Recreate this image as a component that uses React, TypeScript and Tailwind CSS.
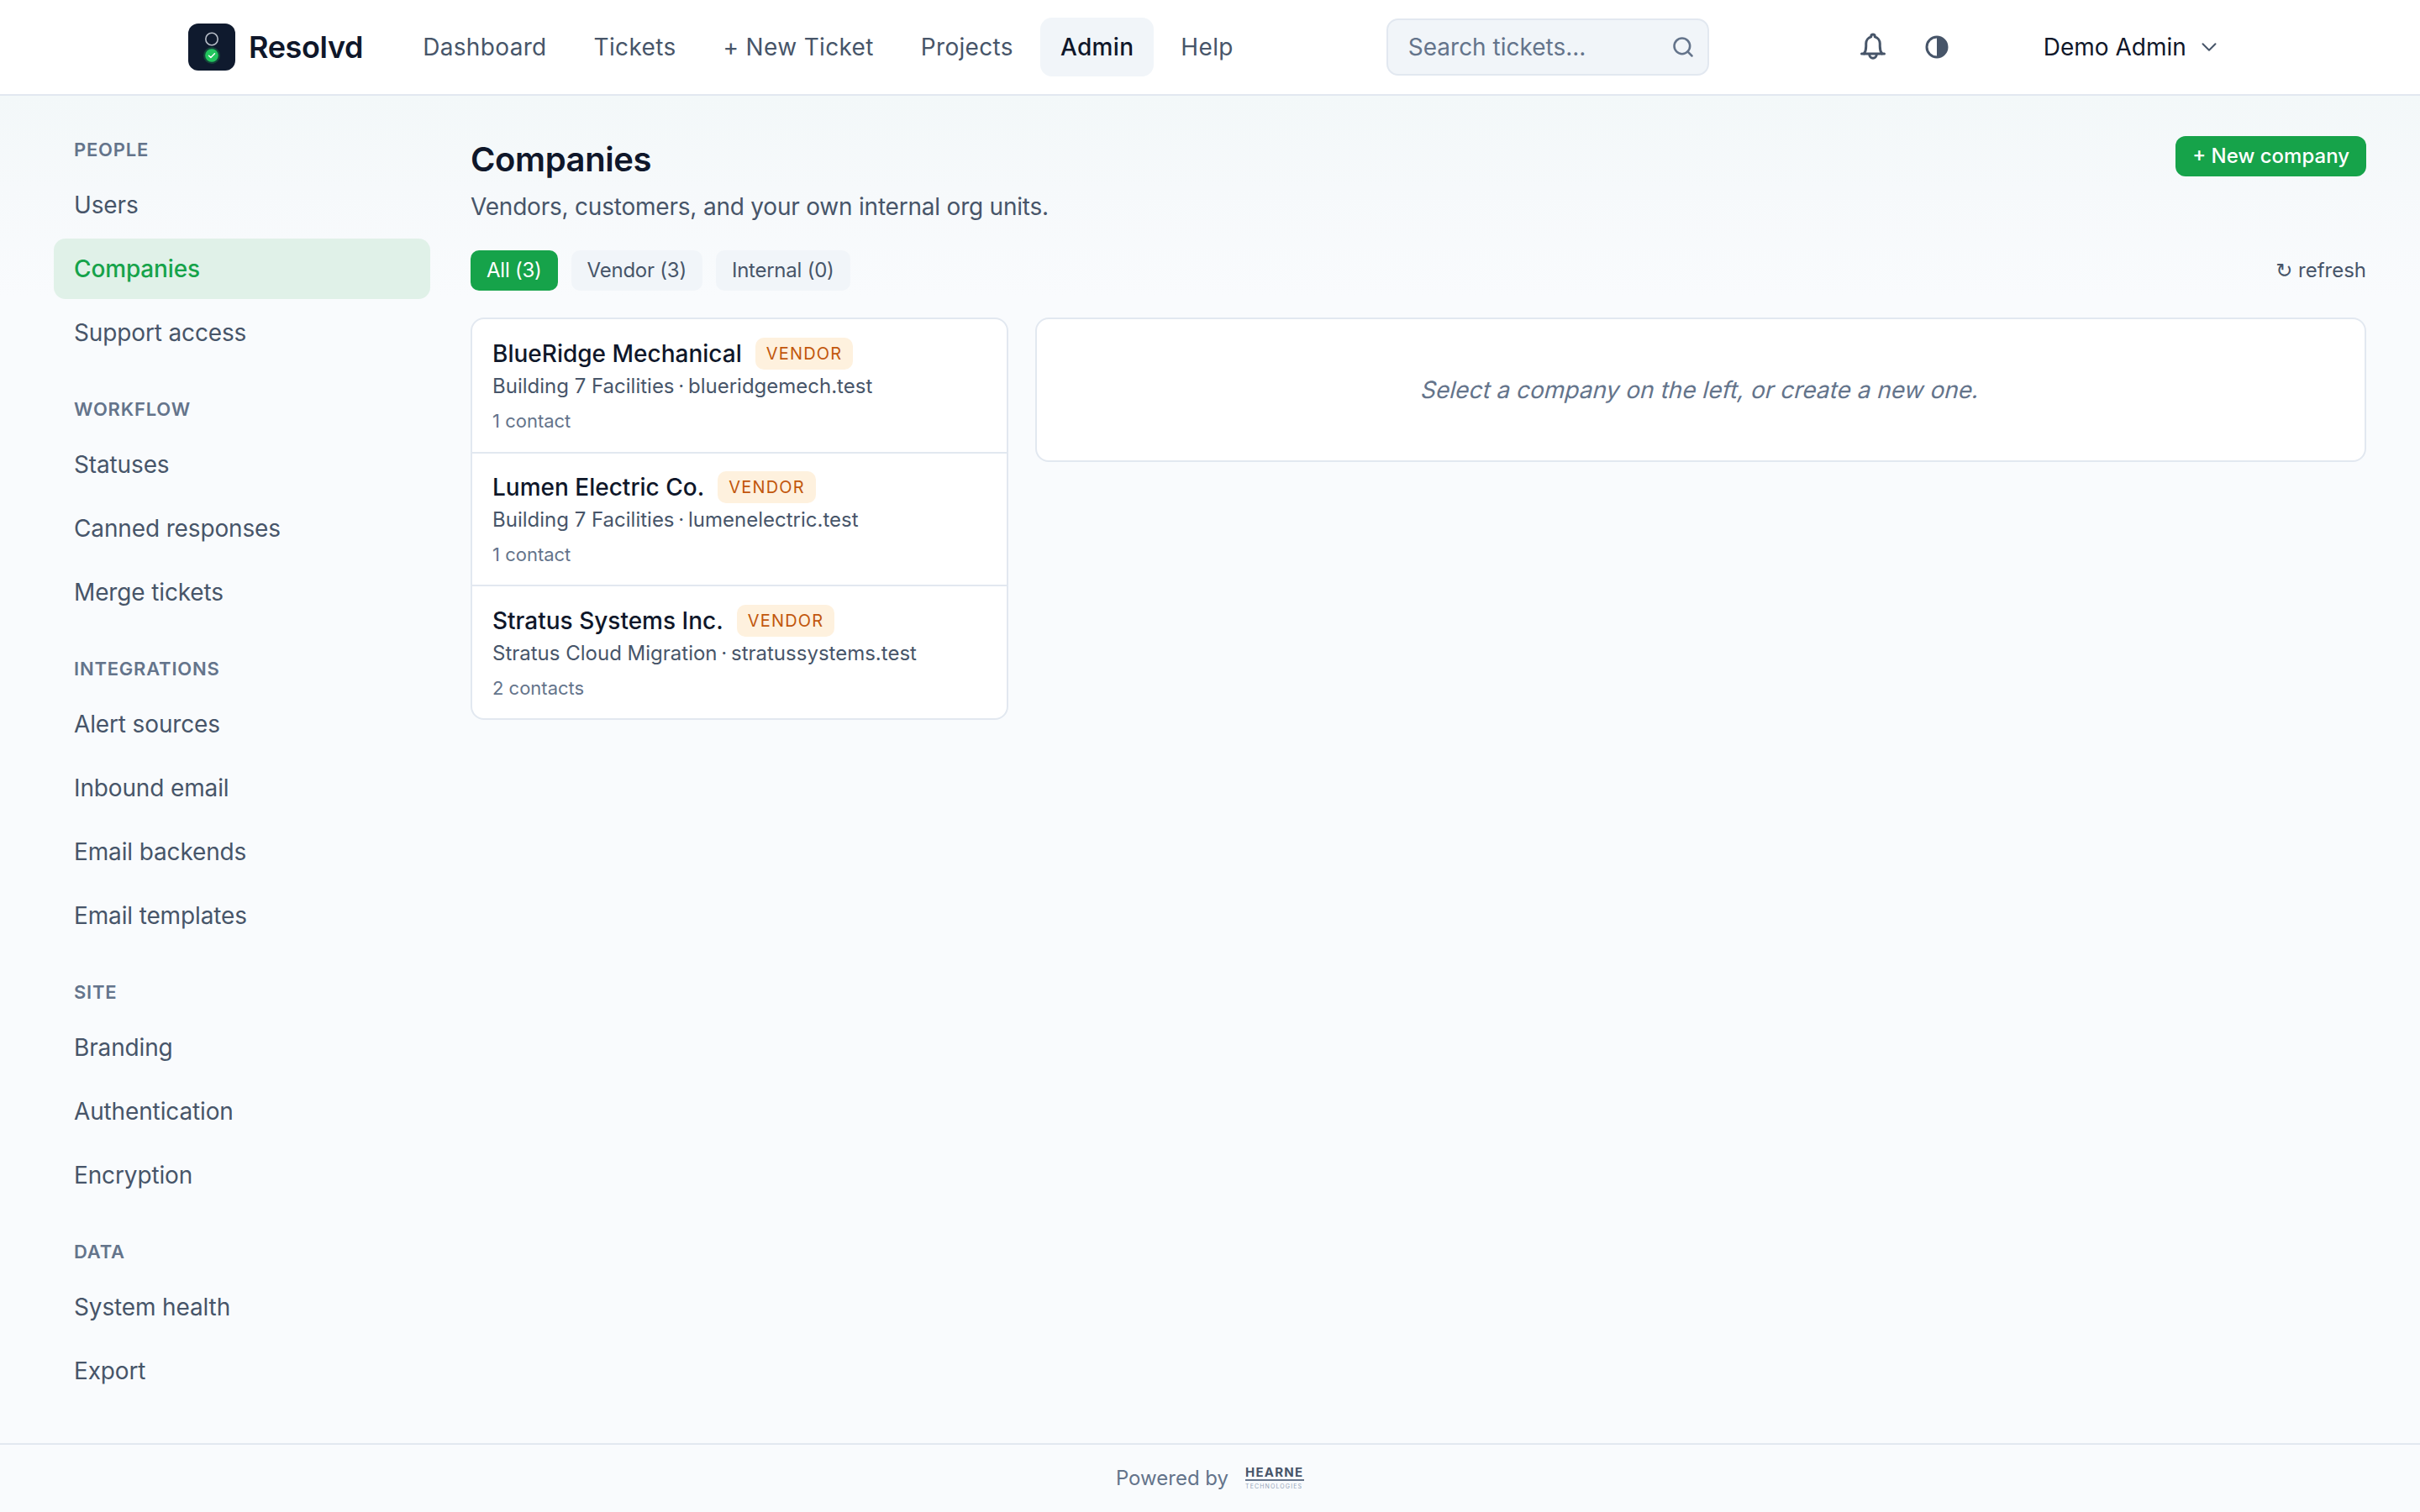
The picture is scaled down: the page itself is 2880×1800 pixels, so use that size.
import { ChevronDown, Search } from "lucide-react";

const navItems = ["Dashboard", "Tickets", "+ New Ticket", "Projects", "Admin", "Help"];

const sections = [
  { label: "PEOPLE", items: ["Users", "Companies", "Support access"] },
  { label: "WORKFLOW", items: ["Statuses", "Canned responses", "Merge tickets"] },
  { label: "INTEGRATIONS", items: ["Alert sources", "Inbound email", "Email backends", "Email templates"] },
  { label: "SITE", items: ["Branding", "Authentication", "Encryption"] },
  { label: "DATA", items: ["System health", "Export"] },
];

const companies = [
  { name: "BlueRidge Mechanical", org: "Building 7 Facilities", domain: "blueridgemech.test", contacts: "1 contact", rowClass: "h-[160px] border-b-2 border-[#e2e8f0] px-6 pt-[22px]" },
  { name: "Lumen Electric Co.", org: "Building 7 Facilities", domain: "lumenelectric.test", contacts: "1 contact", rowClass: "h-[158px] border-b-2 border-[#e2e8f0] px-6 pt-[21px]" },
  { name: "Stratus Systems Inc.", org: "Stratus Cloud Migration", domain: "stratussystems.test", contacts: "2 contacts", rowClass: "h-[157px] px-6 pt-[22px]" },
];

function Logo() {
  return (
    <svg width="56" height="56" viewBox="0 0 56 56" className="shrink-0">
      <rect width="56" height="56" rx="12" fill="#0f1a2e" />
      <circle cx="28" cy="18.5" r="7.2" fill="none" stroke="#b6bcc6" strokeWidth="1.6" />
      <circle cx="28" cy="38" r="10" fill="#22c55e" opacity="0.25" />
      <circle cx="28" cy="38" r="7.8" fill="#22c55e" />
      <path d="M24.5 38.2l2.4 2.4 4.6-4.8" fill="none" stroke="#fff" strokeWidth="1.4" strokeLinecap="round" strokeLinejoin="round" />
    </svg>
  );
}

function BellIcon() {
  return (
    <svg width="36" height="36" viewBox="0 0 24 24" fill="none" stroke="#475569" strokeWidth="2" strokeLinecap="round" strokeLinejoin="round">
      <path d="M3 17.3h18" />
      <path d="M4.8 17.3c1.2-1.5 1.7-3 1.7-6V9.2a5.5 5.5 0 0 1 4-5.3v-.4a1.5 1.5 0 0 1 3 0v.4a5.5 5.5 0 0 1 4 5.3v2.1c0 3 .5 4.5 1.7 6" />
      <path d="M9.2 18a2.8 2.8 0 0 0 5.6 0" />
    </svg>
  );
}

function ContrastIcon() {
  return (
    <svg width="28" height="28" viewBox="0 0 28 28">
      <circle cx="14" cy="14" r="12" fill="none" stroke="#475569" strokeWidth="3" />
      <path d="M14 2a12 12 0 0 1 0 24z" fill="#475569" />
    </svg>
  );
}

function Header() {
  return (
    <header className="flex h-[114px] shrink-0 items-center border-b-2 border-[#e2e8f0] bg-white pl-[224px]">
      <Logo />
      <span className="ml-4 text-[36px] font-semibold leading-[56px] tracking-[-0.01em] text-[#0f172a]">Resolvd</span>
      <nav className="ml-[47px] flex items-center gap-2">
        {navItems.map((item) => (
          <a
            key={item}
            className={
              item === "Admin"
                ? "rounded-[14px] bg-[#f1f5f9] px-6 py-[14px] text-[28px] font-medium leading-[42px] tracking-[0.012em] text-[#0f172a]"
                : "rounded-[14px] px-6 py-[14px] text-[28px] leading-[42px] tracking-[0.012em] text-[#475569]"
            }
          >
            {item}
          </a>
        ))}
      </nav>
      <div className="ml-[158px] flex h-[68px] w-[384px] items-center justify-between rounded-[14px] border-2 border-[#e2e8f0] bg-[#f1f5f9] pl-6 pr-[15px]">
        <span className="text-[28px] text-[#64748b]">Search tickets...</span>
        <Search size={28} strokeWidth={2.2} className="text-[#64748b]" />
      </div>
      <div className="ml-[177px] flex items-center">
        <BellIcon />
      </div>
      <div className="ml-[44px] flex items-center">
        <ContrastIcon />
      </div>
      <div className="ml-[113px] flex items-center gap-[12px]">
        <span className="text-[28px] text-[#0f172a]">Demo Admin</span>
        <ChevronDown size={30} strokeWidth={1.6} className="text-[#475569]" />
      </div>
    </header>
  );
}

function Sidebar() {
  return (
    <aside className="flex w-[448px] shrink-0 flex-col gap-[37px] pt-[46px]">
      {sections.map((section) => (
        <div key={section.label}>
          <div className="mb-3 pl-6 text-[22px] font-semibold leading-[36px] tracking-[0.036em] text-[#64748b]">
            {section.label}
          </div>
          <div className="flex flex-col gap-1">
            {section.items.map((item) => (
              <a
                key={item}
                className={
                  item === "Companies"
                    ? "block h-[72px] rounded-[14px] bg-[#e0f1e8] pl-6 text-[28px] font-medium leading-[72px] tracking-[-0.005em] text-[#16a34a]"
                    : "block h-[72px] rounded-[14px] pl-6 text-[28px] leading-[72px] tracking-[-0.005em] text-[#475569]"
                }
              >
                {item}
              </a>
            ))}
          </div>
        </div>
      ))}
    </aside>
  );
}

type Company = { name: string; org: string; domain: string; contacts: string; rowClass: string };

function CompanyRow({ name, org, domain, contacts, rowClass }: Company) {
  return (
    <div className={rowClass}>
      <div className="flex h-[38px] items-center gap-4">
        <span className="text-[28px] font-medium leading-[38px] text-[#0f172a]">{name}</span>
        <span className="rounded-[10px] bg-[#fef1de] px-[13px] text-[20px] leading-[38px] tracking-[0.06em] text-[#c2570c]">
          VENDOR
        </span>
      </div>
      <div className="text-[24px] leading-[39px] text-[#475569]">
        {org} <span className="mx-[-2px]">·</span> {domain}
      </div>
      <div className="mt-1 text-[22px] leading-[36px] text-[#64748b]">{contacts}</div>
    </div>
  );
}

export default function App() {
  const filters = ["All (3)", "Vendor (3)", "Internal (0)"];
  return (
    <div className="flex min-h-screen flex-col bg-[#f9fbfd] font-['Inter',sans-serif]">
      <Header />
      <div className="flex flex-1 gap-12 bg-[linear-gradient(180deg,#f3f8f9_0px,#f6f9fb_110px,#f9fbfd_240px)] px-16">
        <Sidebar />
        <main className="min-w-0 flex-1 pt-[48px]">
          <div className="flex items-start justify-between">
            <div>
              <h1 className="text-[40px] font-semibold leading-[56px] tracking-[-0.01em] text-[#0f172a]">Companies</h1>
              <p className="mt-[7px] text-[28px] leading-[42px] tracking-[-0.0075em] text-[#475569]">Vendors, customers, and your own internal org units.</p>
            </div>
            <button className="h-[48px] rounded-[12px] bg-[#16a34a] px-[20px] text-[24px] font-medium text-white">
              + New company
            </button>
          </div>
          <div className="mt-[31px] flex h-[48px] items-center justify-between">
            <div className="flex gap-4">
              {filters.map((f, i) => (
                <span
                  key={f}
                  className={
                    i === 0
                      ? "rounded-[10px] bg-[#16a34a] px-[19px] text-[24px] leading-[48px] tracking-[-0.01em] text-white"
                      : "rounded-[10px] bg-[#f1f5f9] px-[19px] text-[24px] leading-[48px] tracking-[-0.01em] text-[#475569]"
                  }
                >
                  {f}
                </span>
              ))}
            </div>
            <span className="text-[24px] text-[#475569]">
              <span className="font-['DejaVu_Sans',sans-serif]">↻</span> refresh
            </span>
          </div>
          <div className="mt-8 flex items-start gap-8">
            <div className="w-[640px] shrink-0 overflow-hidden rounded-[16px] border-2 border-[#e2e8f0] bg-white">
              {companies.map((c) => (
                <CompanyRow key={c.name} {...c} />
              ))}
            </div>
            <div className="flex h-[172px] flex-1 items-center justify-center rounded-[16px] border-2 border-[#e2e8f0] bg-white">
              <span className="inline-block skew-x-[-14deg] text-[28px] text-[#64748b]">Select a company on the left, or create a new one.</span>
            </div>
          </div>
        </main>
      </div>
      <footer className="flex h-[82px] shrink-0 items-center justify-center gap-5 border-t-2 border-[#e2e8f0] bg-[#f9fbfd]">
        <span className="text-[24px] text-[#64748b]">Powered by</span>
        <div className="flex w-[70px] flex-col items-stretch">
          <span className="text-[15px] font-bold leading-[14px] tracking-[0.08em] text-[#475569]">HEARNE</span>
          <span className="mt-[1px] h-[2px] bg-[#64748b]" />
          <span className="mt-[2px] whitespace-nowrap text-[7px] leading-[9px] tracking-[0.16em] text-[#94a3b8]">TECHNOLOGIES</span>
        </div>
      </footer>
    </div>
  );
}
